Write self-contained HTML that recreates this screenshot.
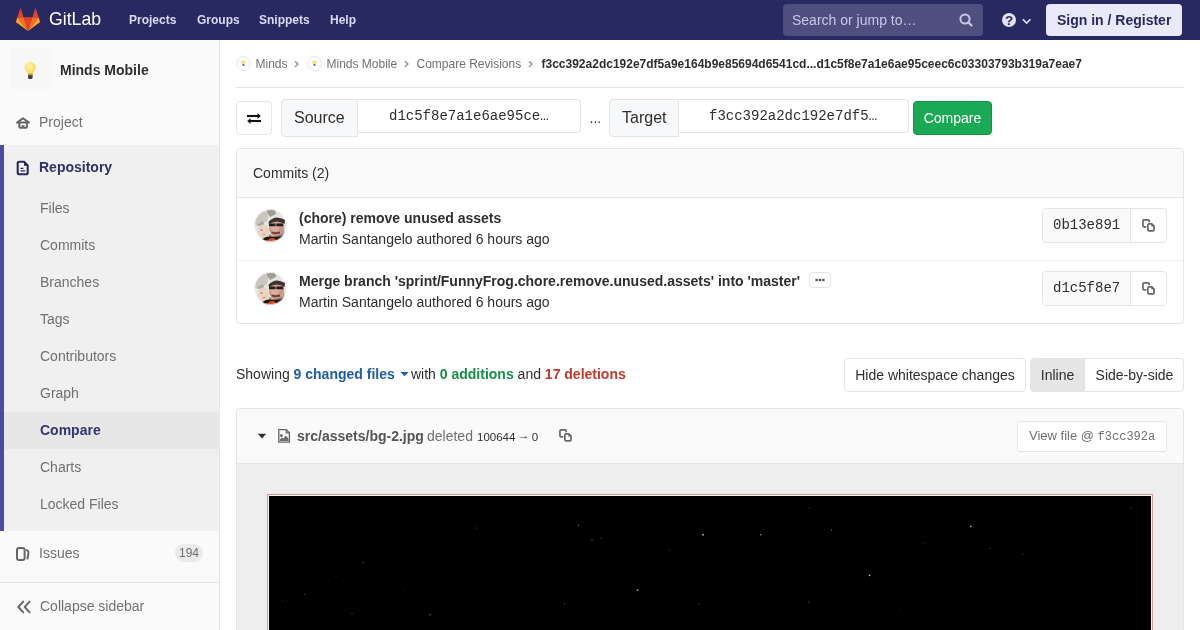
<!DOCTYPE html>
<html><head><meta charset="utf-8">
<style>
*{box-sizing:border-box;margin:0;padding:0}
html,body{width:1200px;height:630px;overflow:hidden;background:#fff;font-family:"Liberation Sans",sans-serif;color:#2e2e2e;font-size:14px}
.a{position:absolute;white-space:nowrap}
svg.a{overflow:visible}
.mono{font-family:"Liberation Mono",monospace}
#hdr{position:absolute;left:0;top:0;width:1200px;height:40px;background:#292961}
.nav{color:#dadaf4;font-weight:bold;font-size:12px;line-height:14px;top:13px}
#sb{position:absolute;left:0;top:40px;width:220px;height:590px;background:#fafafa;border-right:1px solid #e5e5e5}
.sbt{font-size:14px;line-height:16px;color:#707070}
#repo{position:absolute;left:0;top:105px;width:219px;height:386px;background:#f0f0f0;box-shadow:inset 4px 0 0 #4b4ba3}
.brd{font-size:12px;line-height:14px;color:#707070}
.box{position:absolute;border:1px solid #e5e5e5;border-radius:4px;background:#fff}
.btn{position:absolute;border:1px solid #e5e5e5;border-radius:4px;background:#fff;font-size:14px;line-height:16px;text-align:center}
.t16{line-height:16px}
</style></head><body>
<div id="wrap" style="position:absolute;left:0;top:0;width:1200px;height:630px;will-change:transform;background:#fff">
<div id="hdr">
  <svg class="a" style="left:16px;top:8px" width="24" height="23" viewBox="0 0 36 34.5">
    <path fill="#e24329" d="M18 34.38L24.63 14H11.37z"/>
    <path fill="#fc6d26" d="M18 34.38L11.37 14H2.08z"/>
    <path fill="#fca326" d="M2.08 14L.06 20.21a1.38 1.38 0 0 0 .5 1.54L18 34.38z"/>
    <path fill="#e24329" d="M2.08 14h9.29L7.38 1.71a.69.69 0 0 0-1.31 0z"/>
    <path fill="#fc6d26" d="M18 34.38L24.63 14h9.29z"/>
    <path fill="#fca326" d="M33.92 14l2.02 6.21a1.38 1.38 0 0 1-.5 1.54L18 34.38z"/>
    <path fill="#e24329" d="M33.92 14h-9.29l3.99-12.29a.69.69 0 0 1 1.31 0z"/>
  </svg>
  <div class="a" style="left:49px;top:8px;font-size:19px;line-height:21px;color:#fff;transform:scaleX(.93);transform-origin:0 0">GitLab</div>
  <div class="a nav" style="left:129px">Projects</div>
  <div class="a nav" style="left:197px">Groups</div>
  <div class="a nav" style="left:259px">Snippets</div>
  <div class="a nav" style="left:330px">Help</div>
  <div class="a" style="left:783px;top:4px;width:200px;height:32px;border-radius:4px;background:#4e4e7f"></div>
  <div class="a" style="left:792px;top:12px;font-size:14px;line-height:16px;color:#c8c8ea">Search or jump to…</div>
  <svg class="a" style="left:958px;top:12px" width="16" height="16" viewBox="0 0 16 16">
    <circle cx="7" cy="7" r="4.6" fill="none" stroke="#c8c8e2" stroke-width="2"/>
    <path d="M10.3 10.3l3.2 3.2" stroke="#c8c8e2" stroke-width="2.2" stroke-linecap="round"/>
  </svg>
  <svg class="a" style="left:1001px;top:13px" width="32" height="14" viewBox="0 0 32 14">
    <circle cx="8" cy="7" r="7" fill="#e1e1f5"/>
    <text x="8" y="11.8" text-anchor="middle" font-family="Liberation Sans" font-weight="bold" font-size="13.5" fill="#292961">?</text>
    <path d="M21.8 6.2l3.8 3.8 3.8-3.8" fill="none" stroke="#e1e1f5" stroke-width="1.6"/>
  </svg>
  <div class="a" style="left:1046px;top:4px;width:136px;height:32px;border-radius:4px;background:#e9e9f7"></div>
  <div class="a" style="left:1057px;top:12px;font-size:14px;line-height:16px;font-weight:bold;color:#292961">Sign in / Register</div>
</div>

<div id="sb">
  <div class="a" style="left:11px;top:9px;width:40px;height:40px;border-radius:4px;background:#f7f7f8;box-shadow:0 0 1px rgba(0,0,0,.06)"></div>
  <svg class="a" style="left:24px;top:21px" width="13" height="19" viewBox="0 0 13 19">
    <defs><radialGradient id="bg1" cx=".45" cy=".35" r=".65"><stop offset="0" stop-color="#fff6b8"/><stop offset=".6" stop-color="#fde36a"/><stop offset="1" stop-color="#f0c630"/></radialGradient></defs>
    <path d="M6.3 1C3.2 1 .8 3.3.8 6.2c0 2 1.2 3.3 2.2 4.6.6.8.9 1.7.9 2.8h4.8c0-1.1.3-2 .9-2.8 1-1.3 2.2-2.6 2.2-4.6C11.8 3.3 9.4 1 6.3 1z" fill="url(#bg1)"/>
    <path d="M4 13.4h4.6v3.2c0 .8-.6 1.4-1.4 1.4H5.4c-.8 0-1.4-.6-1.4-1.4z" fill="#3c3a34"/>
    <path d="M4 14.6h4.6" stroke="#8a8270" stroke-width=".6"/>
  </svg>
  <div class="a" style="left:60px;top:22px;font-size:14px;line-height:16px;font-weight:bold;color:#2e2e2e">Minds Mobile</div>
  <svg class="a" style="left:16px;top:76px" width="14" height="13" viewBox="0 0 14 13">
    <path d="M7 2.3L1 6.6h12z" fill="none" stroke="#666" stroke-width="2" stroke-linejoin="round"/>
    <path d="M3.3 6.6v4.3c0 .5.3.8.8.8h6c.5 0 .8-.3.8-.8V6.6" fill="none" stroke="#666" stroke-width="2"/>
    <rect x="5.6" y="9.2" width="2.8" height="1.8" fill="#666"/>
  </svg>
  <div class="a sbt" style="left:39px;top:74px">Project</div>
  <div id="repo"></div>
  <svg class="a" style="left:16px;top:120px" width="14" height="16" viewBox="0 0 14 16">
    <path d="M3.2 1.8h4.9l3.6 3.6v7.3c0 .9-.7 1.5-1.5 1.5H3.2c-.9 0-1.5-.7-1.5-1.5V3.3c0-.9.7-1.5 1.5-1.5z" fill="none" stroke="#292961" stroke-width="2.1"/>
    <path d="M8 1.8v4h3.8z" fill="#292961"/>
    <path d="M4.6 8.4h2.8M4.6 10.9h4.6" stroke="#292961" stroke-width="1.2"/>
  </svg>
  <div class="a sbt" style="left:39px;top:119px;font-weight:bold;color:#30306c">Repository</div>
  <div class="a sbt" style="left:40px;top:160px">Files</div>
  <div class="a sbt" style="left:40px;top:197px">Commits</div>
  <div class="a sbt" style="left:40px;top:234px">Branches</div>
  <div class="a sbt" style="left:40px;top:271px">Tags</div>
  <div class="a sbt" style="left:40px;top:308px">Contributors</div>
  <div class="a sbt" style="left:40px;top:345px">Graph</div>
  <div class="a" style="left:4px;top:372px;width:215px;height:37px;background:#e7e7e7"></div>
  <div class="a sbt" style="left:40px;top:382px;font-weight:bold;color:#34346f">Compare</div>
  <div class="a sbt" style="left:40px;top:419px">Charts</div>
  <div class="a sbt" style="left:40px;top:456px">Locked Files</div>
  <svg class="a" style="left:15px;top:506px" width="16" height="16" viewBox="0 0 16 16">
    <rect x="2" y="2" width="7.6" height="12" rx="2" fill="none" stroke="#666" stroke-width="2"/>
    <path d="M11 4.1Q13.7 4.4 13.4 6.9L12.4 13.3" fill="none" stroke="#666" stroke-width="2"/>
  </svg>
  <div class="a sbt" style="left:39px;top:505px">Issues</div>
  <div class="a" style="left:175px;top:504px;width:28px;height:18px;border-radius:9px;background:#eaeaea;font-size:12px;line-height:18px;text-align:center;color:#707070">194</div>
  <div class="a" style="left:0;top:542px;width:219px;height:1px;background:#e5e5e5"></div>
  <svg class="a" style="left:16px;top:560px" width="16" height="14" viewBox="0 0 16 14">
    <path d="M7.2 1.6L2.3 7l4.9 5.4M13.6 1.6L8.7 7l4.9 5.4" fill="none" stroke="#666" stroke-width="1.9" stroke-linecap="round" stroke-linejoin="round"/>
  </svg>
  <div class="a sbt" style="left:40px;top:558px">Collapse sidebar</div>
</div>

<div id="main">
  <svg class="a" style="left:236px;top:56px" width="15" height="15" viewBox="0 0 15 15">
    <circle cx="7.5" cy="7.5" r="7" fill="#fbfbf7" stroke="#ebe9f1" stroke-width="1"/>
    <ellipse cx="7.5" cy="6.2" rx="2.3" ry="2" fill="#efe39a"/>
    <ellipse cx="7.5" cy="8.9" rx="1.1" ry=".9" fill="#5a5a55"/>
  </svg>
  <div class="a brd" style="left:255.5px;top:57px">Minds</div>
  <svg class="a" style="left:293px;top:59px" width="6" height="9" viewBox="0 0 6 9"><path d="M2 2.2l2.9 2.9L2 8" fill="none" stroke="#9a9a9a" stroke-width="1.5"/></svg>
  <svg class="a" style="left:307px;top:56px" width="15" height="15" viewBox="0 0 15 15">
    <circle cx="7.5" cy="7.5" r="7" fill="#fbfbf7" stroke="#ebe9f1" stroke-width="1"/>
    <ellipse cx="7.5" cy="6.2" rx="2.3" ry="2" fill="#efe39a"/>
    <ellipse cx="7.5" cy="8.9" rx="1.1" ry=".9" fill="#5a5a55"/>
  </svg>
  <div class="a brd" style="left:326.5px;top:57px">Minds Mobile</div>
  <svg class="a" style="left:403px;top:59px" width="6" height="9" viewBox="0 0 6 9"><path d="M2 2.2l2.9 2.9L2 8" fill="none" stroke="#9a9a9a" stroke-width="1.5"/></svg>
  <div class="a brd" style="left:416.5px;top:57px">Compare Revisions</div>
  <svg class="a" style="left:527px;top:59px" width="6" height="9" viewBox="0 0 6 9"><path d="M2 2.2l2.9 2.9L2 8" fill="none" stroke="#9a9a9a" stroke-width="1.5"/></svg>
  <div class="a brd" style="left:541.5px;top:57px;font-weight:bold;color:#2e2e2e">f3cc392a2dc192e7df5a9e164b9e85694d6541cd...d1c5f8e7a1e6ae95ceec6c03303793b319a7eae7</div>
  <div class="a" style="left:236px;top:87px;width:948px;height:1px;background:#e5e5e5"></div>

  <div class="btn" style="left:236px;top:101px;width:36px;height:34px"></div>
  <svg class="a" style="left:246px;top:112px" width="16" height="13" viewBox="0 0 16 13">
    <path d="M1 4h11" stroke="#111" stroke-width="2.1"/><path d="M11.5 1l3.3 3-3.3 3z" fill="#111"/>
    <path d="M15 9H4" stroke="#111" stroke-width="2.1"/><path d="M4.5 6.2L1.2 9l3.3 3z" fill="#111"/>
  </svg>
  <div class="a" style="left:281px;top:99px;width:77px;height:38px;background:#f7f8fa;border:1px solid #e5e5e5;border-radius:4px 0 0 4px"></div>
  <div class="a" style="left:294px;top:109px;font-size:16px;line-height:18px">Source</div>
  <div class="a" style="left:357px;top:99px;width:224px;height:34px;background:#fff;border:1px solid #e5e5e5;border-radius:0 4px 4px 0"></div>
  <div class="a mono" style="left:389px;top:108px;font-size:14px;line-height:16px">d1c5f8e7a1e6ae95ce…</div>
  <div class="a" style="left:589.5px;top:110px;font-size:14px;line-height:16px">...</div>
  <div class="a" style="left:609px;top:99px;width:70px;height:38px;background:#f7f8fa;border:1px solid #e5e5e5;border-radius:4px 0 0 4px"></div>
  <div class="a" style="left:622px;top:109px;font-size:16px;line-height:18px">Target</div>
  <div class="a" style="left:678px;top:99px;width:231px;height:34px;background:#fff;border:1px solid #e5e5e5;border-radius:0 4px 4px 0"></div>
  <div class="a mono" style="left:709px;top:108px;font-size:14px;line-height:16px">f3cc392a2dc192e7df5…</div>
  <div class="a" style="left:913px;top:101px;width:79px;height:34px;background:#1aaa55;border:1px solid #168f48;border-radius:4px;color:#fff;font-size:14px;line-height:32px;text-align:center">Compare</div>

  <div class="box" style="left:236px;top:148px;width:948px;height:176px;overflow:hidden">
    <div class="a" style="left:0;top:0;width:946px;height:49px;background:#fafafa;border-bottom:1px solid #e5e5e5"></div>
    <div class="a" style="left:0;top:111px;width:946px;height:1px;background:#f0f0f0"></div>
  </div>
  <div class="a t16" style="left:253px;top:165px">Commits (2)</div>

  <svg class="a" style="left:254px;top:209px" width="33" height="33" viewBox="0 0 33 33">
    <defs>
      <clipPath id="cp"><circle cx="16.5" cy="16.5" r="16.2"/></clipPath>
      <filter id="bl" x="-10%" y="-10%" width="120%" height="120%"><feGaussianBlur stdDeviation=".45"/></filter>
      <g id="avg">
      <rect width="33" height="33" fill="#e6e4e0"/>
      <path d="M0 6 L8 1 L15 4 L13 12 L4 17 L0 15z" fill="#b5b0a8" opacity=".6"/>
      <path d="M12 1 L21 0 L22 5 L16 8z" fill="#7f7b75" opacity=".7"/>
      <path d="M3 16 L9 12 L11 19 z" fill="#8e8a84" opacity=".6"/>
      <ellipse cx="9.5" cy="22.5" rx="5.5" ry="7" fill="#e9d2c0"/>
      <ellipse cx="7.5" cy="21" rx="1" ry=".7" fill="#7a6a60"/>
      <ellipse cx="10" cy="25.5" rx="1.6" ry=".8" fill="#c99a8a"/>
      <ellipse cx="22.5" cy="19" rx="7.5" ry="9" fill="#c9988a"/>
      <ellipse cx="21" cy="18" rx="4.5" ry="4.5" fill="#dcb4a4" opacity=".8"/>
      <path d="M14.5 13 Q21 5 31 11 L30.5 15 Q23 10 15 15z" fill="#3c322e"/>
      <path d="M15 14.5h6.5v2.8H15z M22.3 14.5h7v2.8h-7z" fill="#231c1a"/>
      <path d="M17.5 22.5 Q21.5 24 26 22.5 L26 24.5 Q21.5 26 17.5 24.5z" fill="#7a3e34"/>
      <path d="M15 25 Q22 30 29 24 L30 20 L30.5 27 Q22 33 15 28z" fill="#7a6460" opacity=".75"/>
      <path d="M6 33 Q11 26 19 28 Q27 28 33 25 L33 33z" fill="#24180f"/>
      <path d="M13 33 Q15 28.5 19 29 Q22 29.5 23 33z" fill="#d24a1e"/>
      </g>
    </defs>
    <g clip-path="url(#cp)"><g filter="url(#bl)"><use href="#avg"/></g></g>
    <circle cx="16.5" cy="16.5" r="16" fill="none" stroke="rgba(255,255,255,.6)" stroke-width="1"/>
  </svg>
  <div class="a t16" style="left:299px;top:210px;font-weight:bold">(chore) remove unused assets</div>
  <div class="a t16" style="left:299px;top:231px">Martin Santangelo authored 6 hours ago</div>

  <svg class="a" style="left:254px;top:272px" width="33" height="33" viewBox="0 0 33 33">
    <g clip-path="url(#cp)"><g filter="url(#bl)"><use href="#avg"/></g></g>
    <circle cx="16.5" cy="16.5" r="16" fill="none" stroke="rgba(255,255,255,.6)" stroke-width="1"/>
  </svg>
  <div class="a t16" style="left:299px;top:273px;font-weight:bold">Merge branch 'sprint/FunnyFrog.chore.remove.unused.assets' into 'master'</div>
  <div class="a" style="left:809px;top:272px;width:22px;height:16px;border:1px solid #e5e5e5;border-radius:3px;background:#fff"></div>
  <svg class="a" style="left:815px;top:278px" width="10" height="4" viewBox="0 0 10 4"><circle cx="1.6" cy="2" r="1.35" fill="#555"/><circle cx="5" cy="2" r="1.35" fill="#555"/><circle cx="8.4" cy="2" r="1.35" fill="#555"/></svg>
  <div class="a t16" style="left:299px;top:294px">Martin Santangelo authored 6 hours ago</div>

  <!-- sha groups -->
  <div class="a" style="left:1042px;top:208px;width:125px;height:35px;border:1px solid #e5e5e5;border-radius:4px;background:#fff;overflow:hidden">
    <div class="a" style="left:0;top:0;width:88px;height:33px;background:#fafafa;border-right:1px solid #e5e5e5"></div>
  </div>
  <div class="a mono t16" style="left:1053px;top:217px;color:#2e2e2e">0b13e891</div>
  <svg class="a" style="left:1141px;top:218px" width="16" height="16" viewBox="0 0 16 16" fill="none" stroke="#666" stroke-width="1.7">
    <path d="M5.3 8.85H3.1c-.65 0-1.15-.5-1.15-1.15V3c0-.65.5-1.15 1.15-1.15h4c.65 0 1.15.5 1.15 1.15v1.3"/>
    <path d="M8 5.95h2.8l2.25 2.25v3.5c0 .65-.5 1.15-1.15 1.15H8c-.65 0-1.15-.5-1.15-1.15V7.1c0-.65.5-1.15 1.15-1.15z"/>
    <path d="M10.4 5.6l3 3h-3z" fill="#666" stroke="none"/>
  </svg>
  <div class="a" style="left:1042px;top:271px;width:125px;height:35px;border:1px solid #e5e5e5;border-radius:4px;background:#fff;overflow:hidden">
    <div class="a" style="left:0;top:0;width:88px;height:33px;background:#fafafa;border-right:1px solid #e5e5e5"></div>
  </div>
  <div class="a mono t16" style="left:1053px;top:280px;color:#2e2e2e">d1c5f8e7</div>
  <svg class="a" style="left:1141px;top:281px" width="16" height="16" viewBox="0 0 16 16" fill="none" stroke="#666" stroke-width="1.7">
    <path d="M5.3 8.85H3.1c-.65 0-1.15-.5-1.15-1.15V3c0-.65.5-1.15 1.15-1.15h4c.65 0 1.15.5 1.15 1.15v1.3"/>
    <path d="M8 5.95h2.8l2.25 2.25v3.5c0 .65-.5 1.15-1.15 1.15H8c-.65 0-1.15-.5-1.15-1.15V7.1c0-.65.5-1.15 1.15-1.15z"/>
    <path d="M10.4 5.6l3 3h-3z" fill="#666" stroke="none"/>
  </svg>

  <div class="a t16" style="left:236px;top:366px">Showing <b style="color:#1c5ea8">9 changed files</b></div>
  <svg class="a" style="left:399.5px;top:371px" width="9" height="6" viewBox="0 0 9 6"><path d="M0.4 1h8.2L4.5 5.2z" fill="#1c5ea8"/></svg>
  <div class="a t16" style="left:411px;top:366px">with <b style="color:#168f48">0 additions</b> and <b style="color:#c0392b">17 deletions</b></div>
  <div class="btn" style="left:844px;top:358px;width:182px;height:34px;line-height:32px">Hide whitespace changes</div>
  <div class="btn" style="left:1030px;top:358px;width:154px;height:34px;overflow:hidden">
    <div class="a" style="left:0;top:0;width:54px;height:32px;background:#e5e5e5;border-right:1px solid #e0e0e0;line-height:32px;text-align:center">Inline</div>
  </div>
  <div class="a" style="left:1085px;top:358px;width:99px;line-height:34px;text-align:center">Side-by-side</div>

  <div class="box" style="left:236px;top:408px;width:948px;height:240px;overflow:hidden;background:#eee">
    <div class="a" style="left:0;top:0;width:946px;height:55px;background:#fafafa;border-bottom:1px solid #e5e5e5"></div>
    <div class="a" style="left:30px;top:85px;width:886px;height:200px;background:#000;border:1px solid #d09a9a;box-shadow:inset 0 0 0 1px #fbf6f6"></div>
  </div>

  <svg class="a" style="left:268px;top:495px" width="884" height="135" viewBox="0 0 884 135"><circle cx="435.0" cy="39.8" r="1.0" fill="#9a9ac8"/><circle cx="369.4" cy="95.0" r="0.9" fill="#8f8fe0"/><circle cx="310.5" cy="30.2" r="0.7" fill="#777"/><circle cx="324.0" cy="45.0" r="0.7" fill="#666"/><circle cx="333.0" cy="43.0" r="0.6" fill="#666"/><circle cx="95.0" cy="67.4" r="0.7" fill="#555"/><circle cx="162.0" cy="119.7" r="0.7" fill="#777"/><circle cx="296.5" cy="108.7" r="0.6" fill="#555"/><circle cx="208.8" cy="33.0" r="0.6" fill="#555"/><circle cx="36.8" cy="99.4" r="0.6" fill="#555"/><circle cx="84.0" cy="118.6" r="0.6" fill="#555"/><circle cx="431.0" cy="108.7" r="0.6" fill="#444"/><circle cx="401.5" cy="55.0" r="0.6" fill="#444"/><circle cx="68.0" cy="81.0" r="0.6" fill="#555"/><circle cx="14.7" cy="105.0" r="0.6" fill="#444"/><circle cx="492.8" cy="39.8" r="0.8" fill="#8a8ab8"/><circle cx="702.8" cy="31.3" r="0.9" fill="#aab"/><circle cx="601.5" cy="80.3" r="0.9" fill="#bbb"/><circle cx="563.5" cy="35.0" r="0.7" fill="#666"/><circle cx="540.7" cy="106.8" r="0.6" fill="#555"/><circle cx="655.6" cy="48.0" r="0.6" fill="#444"/><circle cx="863.0" cy="13.0" r="0.6" fill="#444"/><circle cx="541.5" cy="13.0" r="0.6" fill="#444"/><circle cx="755.0" cy="59.0" r="0.6" fill="#444"/><circle cx="722.0" cy="53.4" r="0.6" fill="#444"/><circle cx="136.0" cy="95.0" r="0.5" fill="#333"/><circle cx="252.0" cy="65.0" r="0.5" fill="#333"/><circle cx="182.0" cy="25.0" r="0.5" fill="#333"/><circle cx="812.0" cy="105.0" r="0.5" fill="#333"/><circle cx="832.0" cy="25.0" r="0.5" fill="#333"/><circle cx="632.0" cy="115.0" r="0.5" fill="#333"/></svg>
  <svg class="a" style="left:257px;top:433px" width="10" height="6" viewBox="0 0 10 6"><path d="M0.8 0.8h8.4L5 5.4z" fill="#2e2e2e"/></svg>
  <svg class="a" style="left:277px;top:428px" width="14" height="16" viewBox="0 0 14 16">
    <path d="M1.8 1.7h7.5l3.1 3.1v9.3H1.8z" fill="none" stroke="#666" stroke-width="1.3"/>
    <path d="M9.2 1.7v3.2h3.2" fill="none" stroke="#666" stroke-width="1.1"/>
    <circle cx="4.4" cy="7.4" r="1.5" fill="#6f6f6f"/>
    <path d="M2.8 12.9V11.6l2.3-2.2 1.3 1.1 2.5-3.1 2.6 3.3v2.2z" fill="#6f6f6f"/>
  </svg>
  <div class="a t16" style="left:297px;top:428px;font-weight:bold;color:#555">src/assets/bg-2.jpg</div>
  <div class="a t16" style="left:427px;top:428px;color:#707070">deleted</div>
  <div class="a" style="left:477px;top:430px;font-size:11.5px;line-height:14px">100644 <span style="position:relative;top:-1.7px;left:-0.5px;margin-right:-1.5px">→</span> 0</div>
  <svg class="a" style="left:558px;top:428px" width="16" height="16" viewBox="0 0 16 16" fill="none" stroke="#666" stroke-width="1.7">
    <path d="M5.3 8.85H3.1c-.65 0-1.15-.5-1.15-1.15V3c0-.65.5-1.15 1.15-1.15h4c.65 0 1.15.5 1.15 1.15v1.3"/>
    <path d="M8 5.95h2.8l2.25 2.25v3.5c0 .65-.5 1.15-1.15 1.15H8c-.65 0-1.15-.5-1.15-1.15V7.1c0-.65.5-1.15 1.15-1.15z"/>
    <path d="M10.4 5.6l3 3h-3z" fill="#666" stroke="none"/>
  </svg>
  <div class="a" style="left:1017px;top:421px;width:150px;height:31px;border:1px solid #e5e5e5;border-radius:4px;background:#fff"></div>
  <div class="a" style="left:1029px;top:428px;font-size:13px;line-height:16px;color:#707070">View file @ <span class="mono" style="font-size:12px">f3cc392a</span></div>
</div>
</div>
</body></html>
